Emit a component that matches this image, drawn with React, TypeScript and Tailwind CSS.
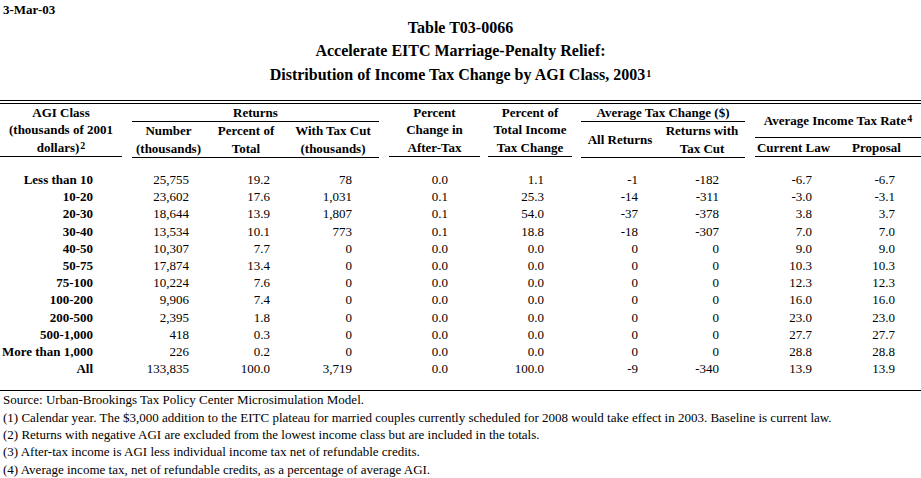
const rows: string[][] = [
  ["Less than 10", "25,755", "19.2", "78", "0.0", "1.1", "-1", "-182", "-6.7", "-6.7"],
  ["10-20", "23,602", "17.6", "1,031", "0.1", "25.3", "-14", "-311", "-3.0", "-3.1"],
  ["20-30", "18,644", "13.9", "1,807", "0.1", "54.0", "-37", "-378", "3.8", "3.7"],
  ["30-40", "13,534", "10.1", "773", "0.1", "18.8", "-18", "-307", "7.0", "7.0"],
  ["40-50", "10,307", "7.7", "0", "0.0", "0.0", "0", "0", "9.0", "9.0"],
  ["50-75", "17,874", "13.4", "0", "0.0", "0.0", "0", "0", "10.3", "10.3"],
  ["75-100", "10,224", "7.6", "0", "0.0", "0.0", "0", "0", "12.3", "12.3"],
  ["100-200", "9,906", "7.4", "0", "0.0", "0.0", "0", "0", "16.0", "16.0"],
  ["200-500", "2,395", "1.8", "0", "0.0", "0.0", "0", "0", "23.0", "23.0"],
  ["500-1,000", "418", "0.3", "0", "0.0", "0.0", "0", "0", "27.7", "27.7"],
  ["More than 1,000", "226", "0.2", "0", "0.0", "0.0", "0", "0", "28.8", "28.8"],
  ["All", "133,835", "100.0", "3,719", "0.0", "100.0", "-9", "-340", "13.9", "13.9"],
];

// right padding per column so the numbers land where the original's do
const cellPad = [
  "pr-[34px] font-bold",
  "pr-[18px]",
  "pr-[20px]",
  "pr-[32px]",
  "pr-[36px]",
  "pr-[33px]",
  "pr-[17px]",
  "pr-[31px]",
  "pr-[26px]",
  "pr-[26px]",
];

const cols = "grid grid-cols-[127px_80px_83px_94px_100px_93px_78px_95px_88px_83px]";

const footnotes = [
  "Source: Urban-Brookings Tax Policy Center Microsimulation Model.",
  "(1) Calendar year. The $3,000 addition to the EITC plateau for married couples currently scheduled for 2008 would take effect in 2003. Baseline is current law.",
  "(2) Returns with negative AGI are excluded from the lowest income class but are included in the totals.",
  "(3) After-tax income is AGI less individual income tax net of refundable credits.",
  "(4) Average income tax, net of refundable credits, as a percentage of average AGI.",
];

function Sup({ children }: { children: React.ReactNode }) {
  return <sup className="text-[10px] relative -top-[3px] ml-px">{children}</sup>;
}

function Header() {
  return (
    <div className="flex h-[53px] text-[13px] font-bold leading-[17.5px] text-center">
      <div className="w-[122px] mr-[10px] flex flex-col justify-end border-b border-black">
        <div>AGI Class</div>
        <div>(thousands of 2001</div>
        <div>
          dollars)<Sup>2</Sup>
        </div>
      </div>
      <div className="w-[247px] mr-[10px] flex flex-col">
        <div className="h-[18px] border-b border-black">Returns</div>
        <div className="flex flex-1 flex-col justify-end border-b border-black">
          <div className="flex">
            <div className="w-[73px]">Number</div>
            <div className="w-[82px]">Percent of</div>
            <div className="w-[92px]">With Tax Cut</div>
          </div>
          <div className="flex">
            <div className="w-[73px]">(thousands)</div>
            <div className="w-[82px]">Total</div>
            <div className="w-[92px]">(thousands)</div>
          </div>
        </div>
      </div>
      <div className="w-[91px] mr-[8px] flex flex-col justify-end border-b border-black">
        <div>Percent</div>
        <div>Change in</div>
        <div>After-Tax</div>
      </div>
      <div className="w-[84px] mr-[9px] flex flex-col justify-end border-b border-black">
        <div>Percent of</div>
        <div>Total Income</div>
        <div>Tax Change</div>
      </div>
      <div className="w-[164px] mr-[10px] flex flex-col">
        <div className="h-[18px] border-b border-black">Average Tax Change ($)</div>
        <div className="flex flex-1 border-b border-black">
          <div className="w-[78px] flex items-center justify-center">All Returns</div>
          <div className="w-[86px] flex flex-col justify-end">
            <div>Returns with</div>
            <div>Tax Cut</div>
          </div>
        </div>
      </div>
      <div className="w-[166px] flex flex-col">
        <div className="h-[34px] flex items-center justify-center border-b border-black">
          <span>
            Average Income Tax Rate<Sup>4</Sup>
          </span>
        </div>
        <div className="flex flex-1 items-end border-b border-black">
          <div className="w-[77px]">Current Law</div>
          <div className="w-[89px]">Proposal</div>
        </div>
      </div>
    </div>
  );
}

export default function App() {
  return (
    <div className="w-[921px] h-[478px] bg-white text-black font-['Liberation_Serif',serif] overflow-hidden">
      <div className="pl-[3px] pt-[3px] text-[13px] font-bold leading-[14px]">3-Mar-03</div>

      <div className="text-center text-[16px] font-bold">
        <div className="leading-[22px]">Table T03-0066</div>
        <div className="leading-[23px]">Accelerate EITC Marriage-Penalty Relief:</div>
        <div className="leading-[26px]">
          Distribution of Income Tax Change by AGI Class, 2003<Sup>1</Sup>
        </div>
      </div>

      <div className="mt-[12px] flex flex-col">
        <div className="h-px bg-black" />
        <div className="h-[2px]" />
        <div className="h-px bg-black" />
      </div>

      <Header />

      <div className="mt-[14px] text-[13px] leading-[17.2px]">
        {rows.map((row) => (
          <div key={row[0]} className={cols}>
            {row.map((cell, i) => (
              <div key={i} className={`text-right ${cellPad[i]}`}>
                {cell}
              </div>
            ))}
          </div>
        ))}
      </div>

      <div className="mt-[13px] h-px bg-black" />

      <div className="pl-[3px] text-[13px] leading-[17.3px]">
        {footnotes.map((f) => (
          <div key={f}>{f}</div>
        ))}
      </div>
    </div>
  );
}
